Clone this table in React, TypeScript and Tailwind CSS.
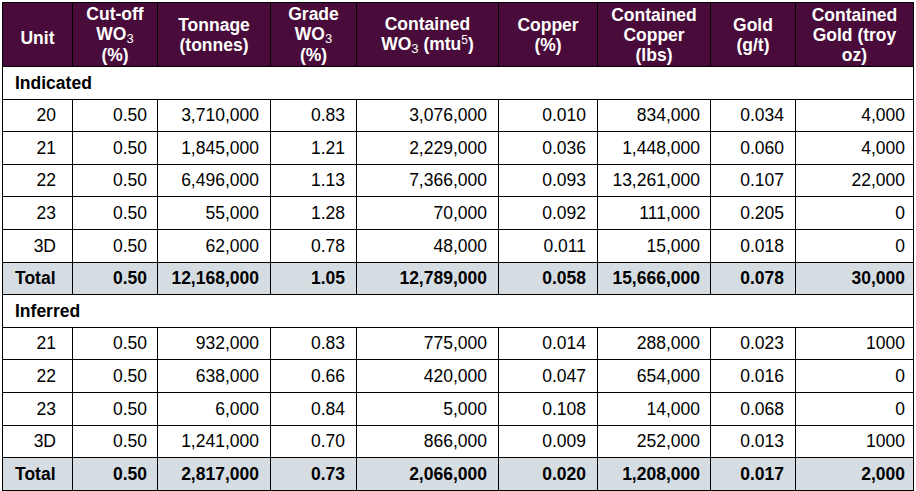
type Row = {
  unit: string;
  cutoff: string;
  tonnage: string;
  grade: string;
  wo3: string;
  copper: string;
  cuLbs: string;
  gold: string;
  goldOz: string;
};

const indicated: Row[] = [
  { unit: "20", cutoff: "0.50", tonnage: "3,710,000", grade: "0.83", wo3: "3,076,000", copper: "0.010", cuLbs: "834,000", gold: "0.034", goldOz: "4,000" },
  { unit: "21", cutoff: "0.50", tonnage: "1,845,000", grade: "1.21", wo3: "2,229,000", copper: "0.036", cuLbs: "1,448,000", gold: "0.060", goldOz: "4,000" },
  { unit: "22", cutoff: "0.50", tonnage: "6,496,000", grade: "1.13", wo3: "7,366,000", copper: "0.093", cuLbs: "13,261,000", gold: "0.107", goldOz: "22,000" },
  { unit: "23", cutoff: "0.50", tonnage: "55,000", grade: "1.28", wo3: "70,000", copper: "0.092", cuLbs: "111,000", gold: "0.205", goldOz: "0" },
  { unit: "3D", cutoff: "0.50", tonnage: "62,000", grade: "0.78", wo3: "48,000", copper: "0.011", cuLbs: "15,000", gold: "0.018", goldOz: "0" },
];

const indicatedTotal: Row = { unit: "Total", cutoff: "0.50", tonnage: "12,168,000", grade: "1.05", wo3: "12,789,000", copper: "0.058", cuLbs: "15,666,000", gold: "0.078", goldOz: "30,000" };

const inferred: Row[] = [
  { unit: "21", cutoff: "0.50", tonnage: "932,000", grade: "0.83", wo3: "775,000", copper: "0.014", cuLbs: "288,000", gold: "0.023", goldOz: "1000" },
  { unit: "22", cutoff: "0.50", tonnage: "638,000", grade: "0.66", wo3: "420,000", copper: "0.047", cuLbs: "654,000", gold: "0.016", goldOz: "0" },
  { unit: "23", cutoff: "0.50", tonnage: "6,000", grade: "0.84", wo3: "5,000", copper: "0.108", cuLbs: "14,000", gold: "0.068", goldOz: "0" },
  { unit: "3D", cutoff: "0.50", tonnage: "1,241,000", grade: "0.70", wo3: "866,000", copper: "0.009", cuLbs: "252,000", gold: "0.013", goldOz: "1000" },
];

const inferredTotal: Row = { unit: "Total", cutoff: "0.50", tonnage: "2,817,000", grade: "0.73", wo3: "2,066,000", copper: "0.020", cuLbs: "1,208,000", gold: "0.017", goldOz: "2,000" };

const keys: (keyof Row)[] = ["unit", "cutoff", "tonnage", "grade", "wo3", "copper", "cuLbs", "gold", "goldOz"];

const widths = ["w-[70px]", "w-[85px]", "w-[113px]", "w-[86px]", "w-[142px]", "w-[99px]", "w-[113px]", "w-[85px]", "w-[118px]"];

const pads = ["pr-[16px]", "pr-[10px]", "pr-[11px]", "pr-[11px]", "pr-[11px]", "pr-[11px]", "pr-[10px]", "pr-[11px]", "pr-[8px]"];

const Sub = ({ children }: { children: React.ReactNode }) => (
  <span className="align-[-3px] text-[13px] leading-none font-normal">{children}</span>
);

function DataRow({ row, total }: { row: Row; total?: boolean }) {
  return (
    <tr className={total ? "bg-[#d5dde3] font-bold" : "bg-white"}>
      {keys.map((k, i) => (
        <td
          key={k}
          className={`h-[32.6px] border border-black p-0 ${
            total && i === 0 ? "pl-[12px] text-left" : `text-right ${pads[i]}`
          }`}
        >
          {row[k]}
        </td>
      ))}
    </tr>
  );
}

function SectionRow({ label }: { label: string }) {
  return (
    <tr className="bg-white">
      <td colSpan={9} className="h-[32.6px] border border-black p-0 pl-[12px] text-left font-bold">
        {label}
      </td>
    </tr>
  );
}

export default function App() {
  return (
    <div className="min-h-screen w-[916px] bg-white pl-[2px] pt-[2px] font-['Liberation_Sans',Arial,sans-serif] text-[17.5px] text-black">
      <table className="table-fixed border-collapse">
        <colgroup>
          {widths.map((w, i) => (
            <col key={i} className={w} />
          ))}
        </colgroup>
        <thead>
          <tr className="bg-[#490c3a] text-center font-bold leading-[20px] text-white">
            <th className="h-[64px] border border-black p-0 pt-[6px]">Unit</th>
            <th className="border border-black p-0">
              Cut-off
              <br />
              WO<Sub>3</Sub>
              <br />
              (%)
            </th>
            <th className="border border-black p-0">
              Tonnage
              <br />
              (tonnes)
            </th>
            <th className="border border-black p-0">
              Grade
              <br />
              WO<Sub>3</Sub>
              <br />
              (%)
            </th>
            <th className="border border-black p-0">
              Contained
              <br />
              WO<Sub>3</Sub> (mtu<sup className="text-[12px] leading-none font-normal">5</sup>)
            </th>
            <th className="border border-black p-0">
              Copper
              <br />
              (%)
            </th>
            <th className="border border-black p-0">
              Contained
              <br />
              Copper
              <br />
              (lbs)
            </th>
            <th className="border border-black p-0">
              Gold
              <br />
              (g/t)
            </th>
            <th className="border border-black p-0">
              Contained
              <br />
              Gold (troy
              <br />
              oz)
            </th>
          </tr>
        </thead>
        <tbody>
          <SectionRow label="Indicated" />
          {indicated.map((r, i) => (
            <DataRow key={`ind-${i}`} row={r} />
          ))}
          <DataRow row={indicatedTotal} total />
          <SectionRow label="Inferred" />
          {inferred.map((r, i) => (
            <DataRow key={`inf-${i}`} row={r} />
          ))}
          <DataRow row={inferredTotal} total />
        </tbody>
      </table>
    </div>
  );
}
